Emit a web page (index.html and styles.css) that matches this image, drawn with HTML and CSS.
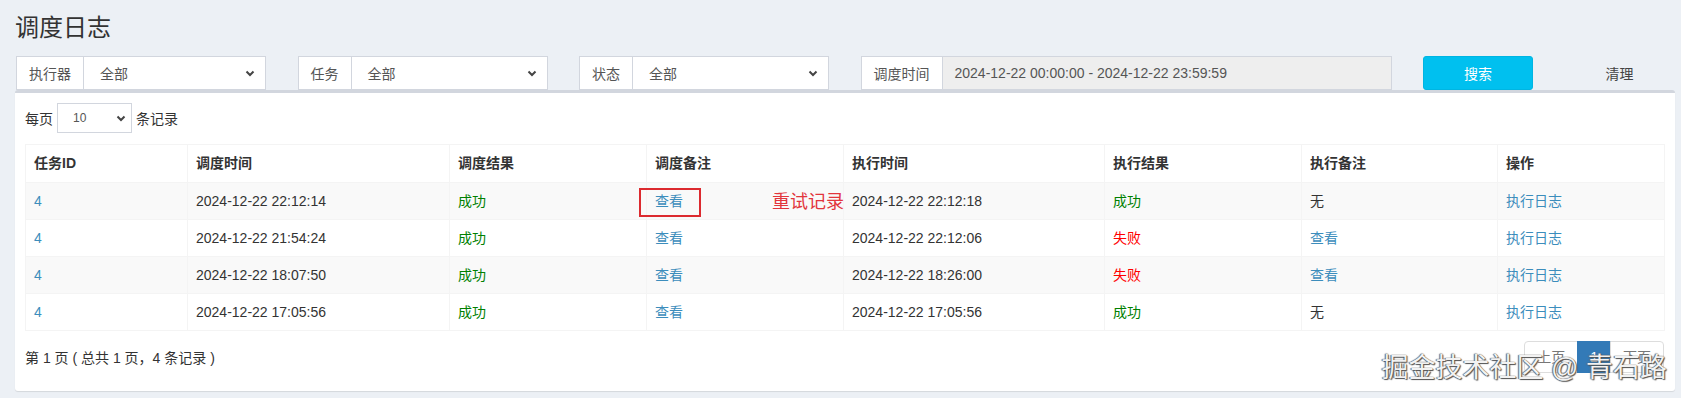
FILE: index.html
```html
<!DOCTYPE html>
<html lang="zh-CN">
<head>
    <meta charset="UTF-8">
    <title>调度日志</title>
    <link rel="stylesheet" href="styles.css">
</head>
<body>
    <div class="content-header">
        <h1>调度日志</h1>
    </div>

    <div class="filters">
        <div class="input-group">
            <span class="addon">执行器</span>
            <div class="fake-select">全部
                <svg class="chevron" width="10" height="7" viewBox="0 0 10 7"><path d="M1.5 1.5 L5 5 L8.5 1.5" fill="none" stroke="#444" stroke-width="2"/></svg>
            </div>
        </div>
        <div class="input-group">
            <span class="addon">任务</span>
            <div class="fake-select">全部
                <svg class="chevron" width="10" height="7" viewBox="0 0 10 7"><path d="M1.5 1.5 L5 5 L8.5 1.5" fill="none" stroke="#444" stroke-width="2"/></svg>
            </div>
        </div>
        <div class="input-group">
            <span class="addon">状态</span>
            <div class="fake-select">全部
                <svg class="chevron" width="10" height="7" viewBox="0 0 10 7"><path d="M1.5 1.5 L5 5 L8.5 1.5" fill="none" stroke="#444" stroke-width="2"/></svg>
            </div>
        </div>
        <div class="input-group">
            <span class="addon">调度时间</span>
            <div class="time-input">2024-12-22 00:00:00 - 2024-12-22 23:59:59</div>
        </div>
        <button class="btn btn-info">搜索</button>
        <button class="btn btn-plain">清理</button>
    </div>

    <div class="box">
        <div class="box-body">
            <div class="length-row">
                <span>每页</span>
                <div class="fake-select small">10
                    <svg class="chevron" width="10" height="7" viewBox="0 0 10 7"><path d="M1.5 1.5 L5 5 L8.5 1.5" fill="none" stroke="#444" stroke-width="2"/></svg>
                </div>
                <span>条记录</span>
            </div>

            <table class="log-table">
                <colgroup>
                    <col style="width:162px"><col style="width:262px"><col style="width:197px"><col style="width:197px">
                    <col style="width:261px"><col style="width:197px"><col style="width:196px"><col style="width:167px">
                </colgroup>
                <thead>
                    <tr>
                        <th>任务ID</th>
                        <th>调度时间</th>
                        <th>调度结果</th>
                        <th>调度备注</th>
                        <th>执行时间</th>
                        <th>执行结果</th>
                        <th>执行备注</th>
                        <th>操作</th>
                    </tr>
                </thead>
                <tbody>
                    <tr>
                        <td><a class="link">4</a></td>
                        <td>2024-12-22 22:12:14</td>
                        <td class="ok">成功</td>
                        <td class="marked">
                            <a class="link">查看</a>
                            <span class="mark-box"></span>
                            <span class="mark-note">重试记录</span>
                        </td>
                        <td>2024-12-22 22:12:18</td>
                        <td class="ok">成功</td>
                        <td>无</td>
                        <td><a class="link">执行日志</a></td>
                    </tr>
                    <tr>
                        <td><a class="link">4</a></td>
                        <td>2024-12-22 21:54:24</td>
                        <td class="ok">成功</td>
                        <td><a class="link">查看</a></td>
                        <td>2024-12-22 22:12:06</td>
                        <td class="fail">失败</td>
                        <td><a class="link">查看</a></td>
                        <td><a class="link">执行日志</a></td>
                    </tr>
                    <tr>
                        <td><a class="link">4</a></td>
                        <td>2024-12-22 18:07:50</td>
                        <td class="ok">成功</td>
                        <td><a class="link">查看</a></td>
                        <td>2024-12-22 18:26:00</td>
                        <td class="fail">失败</td>
                        <td><a class="link">查看</a></td>
                        <td><a class="link">执行日志</a></td>
                    </tr>
                    <tr>
                        <td><a class="link">4</a></td>
                        <td>2024-12-22 17:05:56</td>
                        <td class="ok">成功</td>
                        <td><a class="link">查看</a></td>
                        <td>2024-12-22 17:05:56</td>
                        <td class="ok">成功</td>
                        <td>无</td>
                        <td><a class="link">执行日志</a></td>
                    </tr>
                </tbody>
            </table>

            <div class="table-footer">
                <div class="info">第 1 页 ( 总共 1 页，4 条记录 )</div>
                <ul class="pagination">
                    <li class="disabled">上页</li>
                    <li class="active">1</li>
                    <li class="disabled">下页</li>
                </ul>
            </div>
        </div>
    </div>

    <div class="watermark">掘金技术社区 @ 青石路</div>
</body>
</html>
```

FILE: styles.css
```css
body {
    margin: 0;
    background: #ecf0f5;
    font-family: "Liberation Sans", "Noto Sans CJK SC", sans-serif;
    font-size: 14px;
    color: #333;
    width: 1681px;
    height: 398px;
    overflow: hidden;
    position: relative;
}
.content-header {
    padding: 15px 15px 0 15px;
}
.content-header h1 {
    margin: 0;
    font-size: 24px;
    font-weight: normal;
    line-height: 26px;
    color: #333;
}

/* filter bar */
.filters {
    display: grid;
    grid-template-columns: 250px 250px 250px 531px 110px 110px;
    column-gap: 31.5px;
    padding-left: 16px;
    margin-top: 15px;
    height: 34px;
}
.input-group {
    display: flex;
    height: 34px;
}
.addon {
    display: flex;
    align-items: center;
    padding: 0 12px;
    background: #fff;
    border: 1px solid #d2d6de;
    color: #555;
    white-space: nowrap;
}
.fake-select {
    flex: 1;
    display: flex;
    align-items: center;
    justify-content: space-between;
    padding: 0 10px 0 16px;
    background: #fff;
    border: 1px solid #d2d6de;
    border-left: 0;
    color: #555;
}
.fake-select.small {
    flex: none;
    width: 75px;
    height: 30px;
    box-sizing: border-box;
    border-left: 1px solid #d2d6de;
    padding: 0 5px 0 15px;
    font-size: 12px;
}
.time-input {
    flex: 1;
    display: flex;
    align-items: center;
    padding: 0 12px;
    background: #eee;
    border: 1px solid #d2d6de;
    border-left: 0;
    color: #555;
}
.btn {
    height: 34px;
    border-radius: 3px;
    font-family: inherit;
    font-size: 14px;
    border: 1px solid transparent;
}
.btn-info {
    background: #00c0ef;
    border-color: #00b5e2;
    color: #fff;
}
.btn-plain {
    background: transparent;
    color: #444;
}

/* box */
.box {
    width: 1660px;
    margin-left: 15px;
    background: #fff;
    border-top: 3px solid #d2d6de;
    border-radius: 3px;
    box-shadow: 0 1px 1px rgba(0, 0, 0, 0.1);
}
.box-body {
    padding: 10px 10px 18px 10px;
}
.length-row {
    display: flex;
    align-items: center;
    gap: 4px;
    height: 30px;
    margin-bottom: 11px;
}

/* table */
.log-table {
    width: 100%;
    table-layout: fixed;
    border-collapse: collapse;
    border: 1px solid #f4f4f4;
}
.log-table th,
.log-table td {
    border: 1px solid #f4f4f4;
    padding: 8px;
    line-height: 20px;
    text-align: left;
    white-space: nowrap;
}
.log-table th {
    font-weight: bold;
    padding: 8px 8px 9px 8px;
}
.log-table tbody tr:nth-child(odd) {
    background: #f9f9f9;
}
.link {
    color: #3c8dbc;
}
.ok {
    color: #008000;
}
.fail {
    color: #ff0000;
}
.marked {
    position: relative;
    overflow: visible;
}
.mark-box {
    position: absolute;
    left: -8px;
    top: 5px;
    width: 58px;
    height: 25px;
    border: 2px solid #dc2a2f;
}
.mark-note {
    position: absolute;
    left: 125px;
    top: 8px;
    font-size: 18px;
    line-height: 22px;
    color: #e2353c;
}

/* footer */
.table-footer {
    display: flex;
    justify-content: space-between;
    align-items: center;
    margin-top: 10px;
}
.info {
    padding-left: 0;
}
.pagination {
    display: flex;
    list-style: none;
    margin: 0 1px 0 0;
    padding: 0;
}
.pagination li {
    padding: 5px 12px;
    line-height: 20px;
    border: 1px solid #ddd;
    margin-left: -1px;
    background: #fff;
}
.pagination li:first-child {
    border-radius: 4px 0 0 4px;
}
.pagination li:last-child {
    border-radius: 0 4px 4px 0;
}
.pagination .disabled {
    color: #777;
}
.pagination .active {
    background: #337ab7;
    border-color: #337ab7;
    color: #fff;
}

.watermark {
    position: absolute;
    right: 14px;
    top: 352px;
    font-size: 27px;
    line-height: 32px;
    color: #f2f2f2;
    text-shadow: 0 0 1px #333, 1px 1px 1px #555, -1px 0 1px #777;
}
```
